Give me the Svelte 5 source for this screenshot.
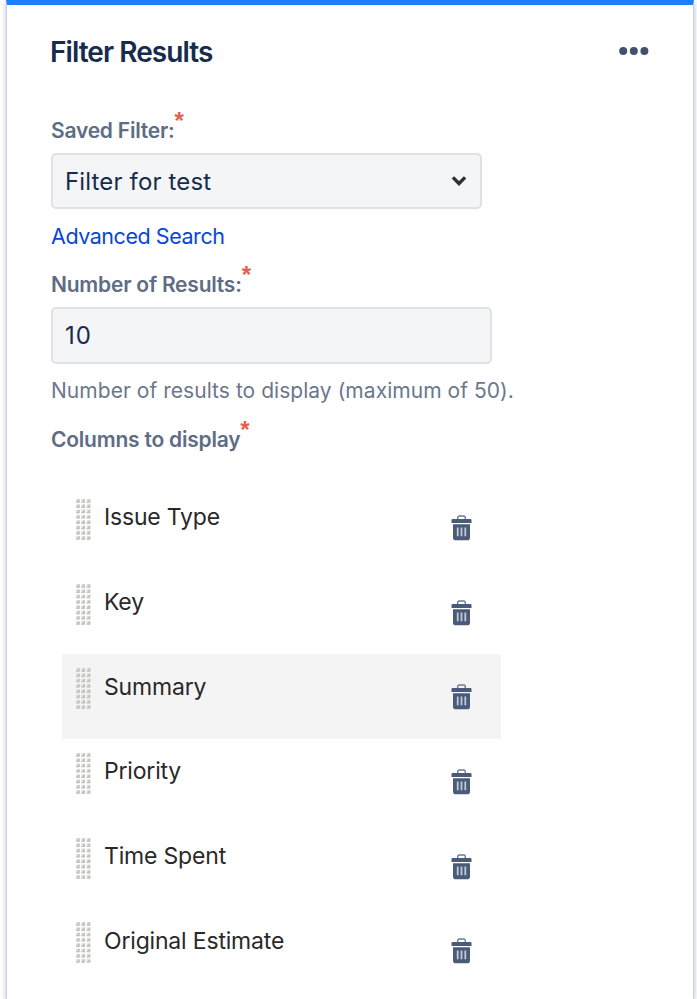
<script>
  let savedFilter = "Filter for test";
  let results = 10;
  let columns = [
    { id: 1, name: "Issue Type" },
    { id: 2, name: "Key" },
    { id: 3, name: "Summary", active: true },
    { id: 4, name: "Priority" },
    { id: 5, name: "Time Spent" },
    { id: 6, name: "Original Estimate" }
  ];

  function remove(column) {
    columns = columns.filter(c => c !== column);
  }
</script>

<div class="gadget">
  <header>
    <h3>Filter Results</h3>
    <button class="more" aria-label="More">
      <svg width="30" height="10" viewBox="0 0 30 10" fill="#42526e">
        <circle cx="4.2" cy="5" r="4" />
        <circle cx="14.8" cy="5" r="4" />
        <circle cx="25.4" cy="5" r="4" />
      </svg>
    </button>
  </header>

  <form>
    <label class="saved" for="saved-filter">Saved Filter:<span class="required">*</span></label>
    <div class="select">
      <select id="saved-filter" bind:value={savedFilter}>
        <option>Filter for test</option>
      </select>
      <svg class="chevron" width="16" height="12" viewBox="0 0 16 12">
        <path d="M1.9 2.4 8 8.5l6.1-6.1" fill="none" stroke="#303030" stroke-width="3.4" />
      </svg>
    </div>
    <a href="#search">Advanced Search</a>

    <label class="number" for="results">Number of Results:<span class="required">*</span></label>
    <input id="results" type="text" bind:value={results} />
    <p>Number of results to display (maximum of 50).</p>

    <div class="label columns-label">Columns to display<span class="required">*</span></div>
    <ul>
      {#each columns as column (column.id)}
        <li class:active={column.active}>
          <svg class="grip" width="15" height="42" viewBox="0 0 15 42">
            {#each [0, 1, 2, 3, 4, 5, 6, 7] as row}
              {#each [0, 1, 2] as col}
                <g transform="translate({col * 5.3} {row * 5.3})">
                  <rect width="3.7" height="3.7" rx="1" fill="#dededc" />
                  <path d="M3.7 0v3.7H0V2.4h1.6V1.1z" fill="#c2c2bf" />
                </g>
              {/each}
            {/each}
          </svg>
          <span class="name">{column.name}</span>
          <button type="button" class="trash" aria-label="Delete {column.name}" on:click={() => remove(column)}>
            <svg width="21" height="26" viewBox="0 0 21 26">
              <path d="M6.7 4.2V2.6Q6.7 1 8.4 1h4.2q1.7 0 1.7 1.6v1.6" fill="none" stroke="#6b7a94" stroke-width="1.4" />
              <path d="M1.5 4h18q1 0 1 1v3H.5V5q0-1 1-1z" fill="#4a5b79" />
              <path d="M2 9.2h17v13.2q0 2.9-3 2.9H5q-3 0-3-2.9z" fill="#4a5b79" />
              <path d="M6.7 12.5v8.7M10.5 12.5v8.7M14.3 12.5v8.7" stroke="#c0cad5" stroke-width="1.8" />
            </svg>
          </button>
        </li>
      {/each}
    </ul>
  </form>
</div>

<style>
  :global(body) {
    background: #fff;
    overflow: hidden;
  }

  .gadget {
    height: 999px;
    margin: 0 3px 0 6px;
    padding: 0 44px;
    box-sizing: border-box;
    border: 1px solid #c5d5e9;
    border-top: 5px solid #1d7fff;
    border-bottom: 0;
    box-shadow: 0 2px 5px rgba(9, 30, 66, 0.3);
    font-family: Inter, "Liberation Sans", sans-serif;
    overflow: hidden;
  }

  header {
    display: flex;
    justify-content: space-between;
    align-items: center;
    height: 92px;
    margin-left: -1px;
  }

  h3 {
    margin: 2px 0 0;
    font-size: 28px;
    font-weight: 600;
    letter-spacing: -0.95px;
    color: #172b4d;
  }

  button {
    border: 0;
    padding: 0;
    background: none;
    cursor: pointer;
  }

  .more {
    height: 10px;
  }

  svg {
    display: block;
  }

  form {
    display: flex;
    flex-direction: column;
    align-items: flex-start;
  }

  label,
  .label {
    height: 28px;
    line-height: 28px;
    font-size: 21px;
    font-weight: 600;
    letter-spacing: -0.22px;
    color: #5e6c84;
    white-space: nowrap;
  }

  .saved {
    margin-top: 20px;
  }

  .required {
    position: relative;
    top: -9px;
    font-family: "Liberation Sans", sans-serif;
    font-size: 24px;
    font-weight: 700;
    line-height: 1;
    letter-spacing: 0;
    color: #e2604f;
  }

  .select {
    position: relative;
    margin-top: 8px;
  }

  select,
  input {
    display: block;
    height: 56px;
    box-sizing: border-box;
    margin: 0;
    padding: 0 12px;
    border: 2px solid #dfe1e6;
    border-radius: 5px;
    background: #f4f5f7;
    font-family: inherit;
    font-size: 24px;
    letter-spacing: 0.15px;
    color: #172b4d;
    appearance: none;
  }

  select {
    width: 431px;
  }

  .chevron {
    position: absolute;
    right: 15px;
    top: 22px;
  }

  a {
    margin-top: 13px;
    font-size: 21.5px;
    line-height: 28px;
    letter-spacing: -0.45px;
    color: #0747d6;
    text-decoration: none;
  }

  .number {
    margin-top: 21px;
  }

  input {
    width: 441px;
    height: 57px;
    margin-top: 8px;
    letter-spacing: 0.9px;
  }

  p {
    margin: 13px 0 0;
    font-size: 21px;
    line-height: 28px;
    letter-spacing: 0.04px;
    color: #6b778c;
    white-space: nowrap;
  }

  .columns-label {
    margin-top: 21px;
  }

  ul {
    width: 439px;
    margin: 31px 0 0 11px;
    padding: 0;
    list-style: none;
  }

  li {
    display: flex;
    align-items: flex-start;
    height: 84.7px;
    padding: 14px 29px 0 14px;
    box-sizing: border-box;
  }

  .active {
    background: #f4f4f4;
  }

  .name {
    flex: 1;
    margin: 4.2px 0 0 13px;
    font-size: 23px;
    line-height: 28px;
    letter-spacing: -0.18px;
    color: #292929;
  }

  .trash {
    margin-top: 16px;
  }
</style>
